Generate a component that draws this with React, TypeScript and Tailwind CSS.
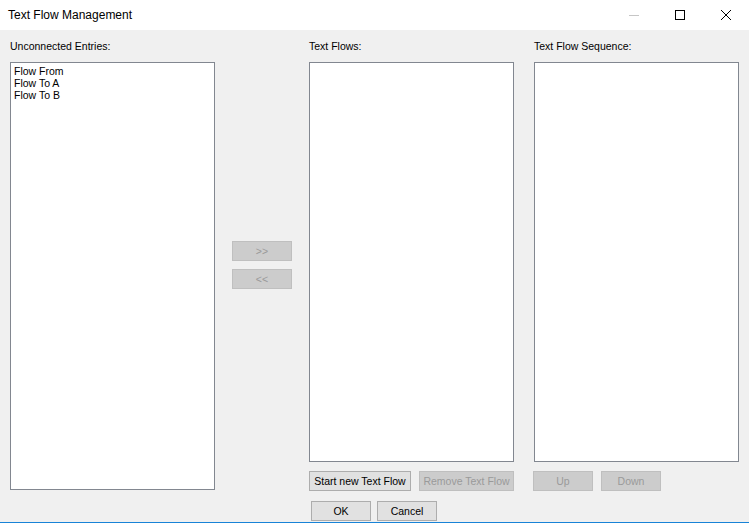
import React from "react";

function Button({
    children,
    disabled,
    className = "",
}: {
    children: React.ReactNode;
    disabled?: boolean;
    className?: string;
}) {
    return (
        <button
            type="button"
            disabled={disabled}
            className={
                "flex h-[20px] items-center justify-center border text-[10.5px] leading-[12px] " +
                (disabled
                    ? "border-[#bfbfbf] bg-[#cccccc] text-[#9a9a9a]"
                    : "border-[#adadad] bg-[#e1e1e1] text-black") +
                " " +
                className
            }
        >
            {children}
        </button>
    );
}

function ListBox({ items = [], className = "" }: { items?: string[]; className?: string }) {
    return (
        <div className={"border border-[#828790] bg-white pl-[3px] pt-[2px] " + className}>
            {items.map((item) => (
                <div key={item} className="text-[10.5px] leading-[12px] text-black">
                    {item}
                </div>
            ))}
        </div>
    );
}

function Label({ children }: { children: React.ReactNode }) {
    return (
        <div className="h-[32px] pt-[10px] text-[10.5px] leading-[12px] text-black">
            {children}
        </div>
    );
}

function CaptionButtons() {
    return (
        <div className="ml-auto flex h-full">
            <div className="flex w-[46px] items-center justify-center">
                <svg width="10" height="10" viewBox="0 0 10 10">
                    <path d="M0 5.5h10" stroke="#c6c6c6" strokeWidth="1" />
                </svg>
            </div>
            <div className="flex w-[46px] items-center justify-center">
                <svg width="10" height="10" viewBox="0 0 10 10">
                    <rect x="0.5" y="0.5" width="9" height="9" fill="none" stroke="#000" strokeWidth="1" />
                </svg>
            </div>
            <div className="flex w-[46px] items-center justify-center">
                <svg width="10" height="10" viewBox="0 0 10 10">
                    <path d="M0 0L10 10M10 0L0 10" stroke="#000" strokeWidth="1" />
                </svg>
            </div>
        </div>
    );
}

export default function App() {
    return (
        <div className="flex h-[523px] w-[749px] flex-col bg-white font-['Liberation_Sans',Arial,sans-serif] text-black">
            <div className="flex h-[30px] shrink-0 items-center">
                <span className="ml-[8px] text-[12px] leading-[14px]">
                    Text Flow Management
                </span>
                <CaptionButtons />
            </div>

            <div className="flex flex-1 flex-col bg-[#f0f0f0]">
                <div className="flex items-start pl-[10px]">
                    <div className="flex w-[205px] flex-col">
                        <Label>Unconnected Entries:</Label>
                        <ListBox className="h-[428px]" items={["Flow From", "Flow To A", "Flow To B"]} />
                    </div>

                    <div className="ml-[17px] flex w-[60px] flex-col gap-[8px] pt-[211px]">
                        <Button disabled className="w-[60px]">&gt;&gt;</Button>
                        <Button disabled className="w-[60px]">&lt;&lt;</Button>
                    </div>

                    <div className="ml-[17px] flex w-[205px] flex-col">
                        <Label>Text Flows:</Label>
                        <ListBox className="h-[400px]" />
                        <div className="mt-[9px] flex gap-[8px]">
                            <Button className="w-[102px]">Start new Text Flow</Button>
                            <Button disabled className="w-[95px]">Remove Text Flow</Button>
                        </div>
                    </div>

                    <div className="ml-[20px] flex w-[205px] flex-col">
                        <Label>Text Flow Sequence:</Label>
                        <ListBox className="h-[400px]" />
                        <div className="-ml-[1px] mt-[9px] flex gap-[8px]">
                            <Button disabled className="w-[60px]">Up</Button>
                            <Button disabled className="w-[60px]">Down</Button>
                        </div>
                    </div>
                </div>

                <div className="ml-[311px] mt-[10px] flex gap-[6px]">
                    <Button className="w-[60px]">OK</Button>
                    <Button className="w-[60px]">Cancel</Button>
                </div>
            </div>

            <div className="h-[1px] shrink-0 bg-[#1883d7]" />
        </div>
    );
}
